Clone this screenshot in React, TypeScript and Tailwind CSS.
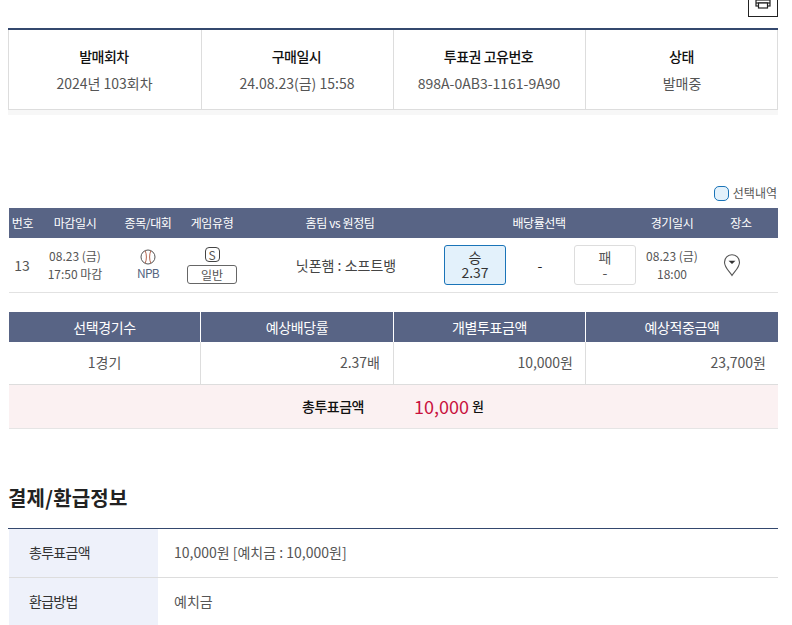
import React from "react";

const gameCols = "grid grid-cols-[27px_78px_68px_60px_196px_202px_64px_74px]";

function Summary({ label, value, last }: { label: string; value: string; last?: boolean }) {
  return (
    <div className={`flex flex-col items-center pt-[15px] ${last ? "" : "border-r border-[#dddddd]"}`}>
      <div className="pr-[2px] text-[14px] leading-[22px] font-medium text-[#111111] tracking-[-0.5px]">{label}</div>
      <div className="mt-[5px] pr-[1px] text-[14px] leading-[22px] text-[#555555]">{value}</div>
    </div>
  );
}

function Ball() {
  return (
    <svg width="16" height="16" viewBox="0 0 16 16" fill="none">
      <circle cx="8" cy="8" r="7" stroke="#555" strokeWidth="1" />
      <path d="M5.2 1.8C6.8 5.5 6.8 10.5 5.2 14.2" stroke="#b5654f" strokeWidth="1" />
      <path d="M10.8 1.8C9.2 5.5 9.2 10.5 10.8 14.2" stroke="#b5654f" strokeWidth="1" />
    </svg>
  );
}

function Pin() {
  return (
    <svg width="18" height="24" viewBox="0 0 18 24" fill="none">
      <path d="M9 22.5C6.5 18.5 1.5 14.5 1.5 9.2A7.5 7.5 0 0 1 16.5 9.2C16.5 14.5 11.5 18.5 9 22.5Z" stroke="#555" strokeWidth="1.1" />
      <path d="M5.5 7.8H12.5L9 11Z" fill="#333" />
    </svg>
  );
}

function Printer() {
  return (
    <svg width="16" height="16" viewBox="0 0 16 16" fill="none" stroke="#222" strokeWidth="1.2">
      <path d="M4 5V1H12V5" />
      <rect x="1" y="5" width="14" height="6" />
      <path d="M1 8H15" />
      <rect x="3.5" y="8" width="9" height="5" fill="#fff" />
    </svg>
  );
}

function Th({ children, border }: { children: React.ReactNode; border?: boolean }) {
  return (
    <div className={`h-[30px] flex items-center justify-center text-[14px] tracking-[-0.4px] text-white ${border ? "border-r border-white" : ""}`}>
      {children}
    </div>
  );
}

export default function App() {
  return (
    <div
      className="w-[792px] h-[625px] overflow-hidden bg-white"
      style={{ fontFamily: '"Noto Sans CJK KR", "Noto Sans", sans-serif' }}
    >
      <div className="ml-[8px] w-[770px]">
        <div className="h-[28px] flex justify-end items-end">
          <div className="mb-[11px] w-[30px] h-[30px] shrink-0 border border-[#222222] bg-white flex items-end justify-center pb-[5px]">
            <Printer />
          </div>
        </div>

        <div className="border-t-2 border-[#34486e]">
          <div className="grid grid-cols-[193px_192px_192px_193px] h-[80px] border-x border-b border-[#dddddd]">
            <Summary label="발매회차" value="2024년 103회차" />
            <Summary label="구매일시" value="24.08.23(금) 15:58" />
            <Summary label="투표권 고유번호" value="898A-0AB3-1161-9A90" />
            <Summary label="상태" value="발매중" last />
          </div>
          <div className="h-[5px] bg-[#f7f7f7]" />
        </div>

        <div className="mt-[66px] h-[24px] flex justify-end items-center gap-[4px] pr-[1px] text-[12px] text-[#555555]">
          <span className="w-[15px] h-[15px] rounded-[5px] border border-[#1a74b8] bg-[#e3f1fb]" />
          <span>선택내역</span>
        </div>

        <div className="ml-[1px] mt-[3px]">
          <div className={`${gameCols} h-[30px] bg-[#586485] text-[12px] tracking-[-0.4px] text-white`}>
            {["번호", "마감일시", "종목/대회", "게임유형", "홈팀 vs 원정팀", "배당률선택", "경기일시", "장소"].map((t) => (
              <div key={t} className="flex items-center justify-center">{t}</div>
            ))}
          </div>
          <div className={`${gameCols} h-[55px] border-b border-[#e2e2e2] items-center text-[#555555]`}>
            <div className="text-center text-[14px] pr-[1px]">13</div>
            <div className="text-center text-[12px] leading-[18px]">
              <div>08.23 (금)</div>
              <div>17:50 마감</div>
            </div>
            <div className="flex flex-col items-center text-[12px] leading-[16px] tracking-[-0.7px] text-[#55657f]">
              <Ball />
              <div>NPB</div>
            </div>
            <div className="flex flex-col items-center">
              <div className="w-[15px] h-[15px] rounded-[4px] border border-[#444444] text-[12px] leading-[13px] text-center">S</div>
              <div className="mt-[3px] w-[50px] h-[19px] rounded-[3px] border border-[#666666] text-[12px] leading-[17px] text-center">일반</div>
            </div>
            <div className="text-center text-[14px] pl-[12px] text-[#444444]">닛폰햄 : 소프트뱅</div>
            <div className="flex items-center justify-between pl-[6px] pr-[4px]">
              <div className="w-[62px] h-[40px] rounded-[3px] border border-[#1a74b8] bg-[#e3f1fb] text-center text-[14px] leading-[15px] text-[#333333] pt-[4px]">
                <div>승</div>
                <div>2.37</div>
              </div>
              <div className="text-[14px] text-[#222222]">-</div>
              <div className="w-[62px] h-[40px] rounded-[3px] border border-[#dddddd] bg-white text-center text-[14px] leading-[15px] text-[#555555] pt-[4px]">
                <div>패</div>
                <div>-</div>
              </div>
            </div>
            <div className="text-center text-[12px] leading-[18px]">
              <div>08.23 (금)</div>
              <div>18:00</div>
            </div>
            <div className="flex justify-center pr-[18px]">
              <Pin />
            </div>
          </div>

          <div className="mt-[19px] bg-[#586485] grid grid-cols-[192px_193px_192px_192px]">
            <Th border>선택경기수</Th>
            <Th border>예상배당률</Th>
            <Th border>개별투표금액</Th>
            <Th>예상적중금액</Th>
          </div>
          <div className="grid grid-cols-[192px_193px_192px_192px] h-[43px] text-[14px] text-[#555555] border-b border-[#dddddd]">
            <div className="flex items-center justify-center pb-[2px] border-r border-[#dddddd]">1경기</div>
            <div className="flex items-center justify-end pr-[13px] pb-[2px] border-r border-[#dddddd]">2.37배</div>
            <div className="flex items-center justify-end pr-[12px] pb-[2px] border-r border-[#dddddd]">10,000원</div>
            <div className="flex items-center justify-end pr-[12px] pb-[2px]">23,700원</div>
          </div>
          <div className="h-[44px] bg-[#fbf1f2] border-b border-[#e5e5e5] flex items-center pl-[293px] pb-[1px]">
            <span className="text-[14px] font-medium tracking-[-0.5px] text-[#111111] w-[112px]">총투표금액</span>
            <span className="text-[18px] leading-[24px] text-[#c9113e]">10,000</span>
            <span className="ml-[3px] text-[13px] font-medium text-[#111111]">원</span>
          </div>
        </div>

        <h2 className="mt-[52px] text-[20px] leading-[34px] font-bold tracking-[0.2px] text-[#222222]">결제/환급정보</h2>

        <div className="mt-[13px] border-t border-[#34486e]">
          <div className="flex h-[49px] border-b border-[#dddddd] ml-[1px]">
            <div className="w-[149px] bg-[#eef1fa] pl-[20px] pb-[1px] flex items-center text-[14px] tracking-[-0.7px] text-[#333333]">총투표금액</div>
            <div className="pl-[16px] pb-[1px] flex items-center text-[14px] text-[#555555]">10,000원 [예치금 : 10,000원]</div>
          </div>
          <div className="flex h-[48px] ml-[1px]">
            <div className="w-[149px] bg-[#eef1fa] pl-[20px] pb-[1px] flex items-center text-[14px] tracking-[-0.7px] text-[#333333]">환급방법</div>
            <div className="pl-[16px] pb-[1px] flex items-center text-[14px] text-[#555555]">예치금</div>
          </div>
        </div>
      </div>
    </div>
  );
}
